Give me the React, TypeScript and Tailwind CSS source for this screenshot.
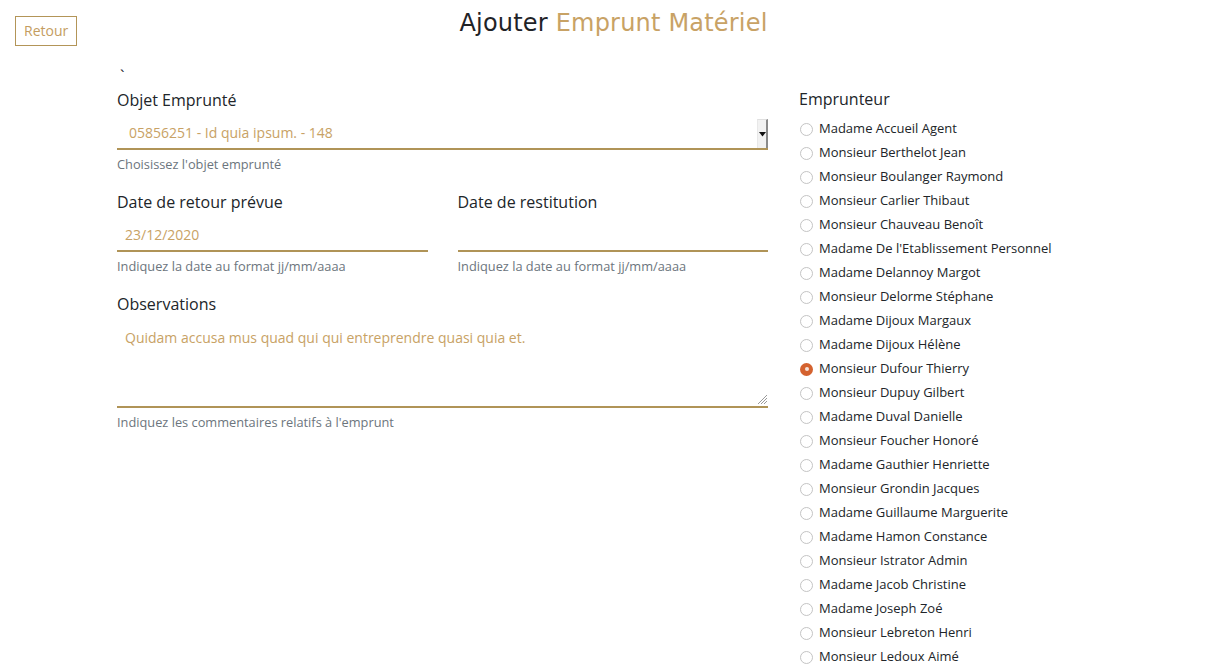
import React from "react";

const names: string[] = [
  "Madame Accueil Agent",
  "Monsieur Berthelot Jean",
  "Monsieur Boulanger Raymond",
  "Monsieur Carlier Thibaut",
  "Monsieur Chauveau Benoît",
  "Madame De l'Etablissement Personnel",
  "Madame Delannoy Margot",
  "Monsieur Delorme Stéphane",
  "Madame Dijoux Margaux",
  "Madame Dijoux Hélène",
  "Monsieur Dufour Thierry",
  "Monsieur Dupuy Gilbert",
  "Madame Duval Danielle",
  "Monsieur Foucher Honoré",
  "Madame Gauthier Henriette",
  "Monsieur Grondin Jacques",
  "Madame Guillaume Marguerite",
  "Madame Hamon Constance",
  "Monsieur Istrator Admin",
  "Madame Jacob Christine",
  "Madame Joseph Zoé",
  "Monsieur Lebreton Henri",
  "Monsieur Ledoux Aimé",
];

function Radio({ checked }: { checked: boolean }) {
  return checked ? (
    <span className="ml-px flex h-[13px] w-[13px] shrink-0 items-center justify-center rounded-full bg-[#d4622f]">
      <span className="h-[4px] w-[4px] rounded-full bg-[#f6e3da]" />
    </span>
  ) : (
    <span className="ml-px h-[13px] w-[13px] shrink-0 rounded-full border border-[#c4c4c4] bg-white" />
  );
}

export default function App() {
  return (
    <div
      className="min-h-[671px] w-full bg-white pt-[8px] text-[#212529]"
      style={{ fontFamily: '"Open Sans", "Liberation Sans", sans-serif' }}
    >
      <div className="grid grid-cols-[1fr_auto_1fr] items-start px-[15px]">
        <div>
          <button className="mt-[8px] h-[30px] border border-[#b39558] px-[8px] text-[14px] leading-[28px] text-[#c49d5f]">
            Retour
          </button>
        </div>
        <h1
          className="mt-[1px] text-[24px] leading-[28px] font-normal tracking-[0.2px]"
          style={{ fontFamily: '"DejaVu Sans", sans-serif' }}
        >
          <span className="text-[#1f2327]">Ajouter </span>
          <span className="text-[#c8a265]">Emprunt Matériel</span>
        </h1>
        <div />
      </div>

      <div className="mt-[18px] pl-[117px]">
        <div className="pl-[3px] text-[16px] leading-[24px]">`</div>
        <div className="flex gap-[31px]">
          <div className="w-[651px] shrink-0">
            <div className="text-[16px] leading-[24px]">Objet Emprunté</div>
            <div className="mt-[5px] flex h-[33px] items-stretch border-b-2 border-[#b09457]">
              <div className="flex flex-1 items-center pl-[12px] text-[14px] text-[#c8a265]">
                05856251 - Id quia ipsum. - 148
              </div>
              <div className="mt-[2px] mb-0 flex w-[11px] items-center justify-center border-t border-l border-r-2 border-t-[#e0e0e0] border-l-[#e8e8e8] border-r-[#8a8a8a] bg-[#f2f2f2]">
                <svg width="7" height="5" viewBox="0 0 7 5">
                  <path d="M0 0 H7 L3.5 4.5 Z" fill="#111" />
                </svg>
              </div>
            </div>
            <div className="mt-[5px] text-[12.8px] leading-[18px] text-[#6c757d]">
              Choisissez l'objet emprunté
            </div>

            <div className="mt-[17px] flex gap-[30px]">
              <div className="flex-1">
                <div className="text-[16px] leading-[24px]">Date de retour prévue</div>
                <div className="mt-[5px] flex h-[33px] items-center border-b-2 border-[#b09457] pl-[8px] text-[14px] text-[#c8a265]">
                  23/12/2020
                </div>
                <div className="mt-[5px] text-[12.8px] leading-[18px] text-[#6c757d]">
                  Indiquez la date au format jj/mm/aaaa
                </div>
              </div>
              <div className="flex-1">
                <div className="text-[16px] leading-[24px]">Date de restitution</div>
                <div className="mt-[5px] h-[33px] border-b-2 border-[#b09457]" />
                <div className="mt-[5px] text-[12.8px] leading-[18px] text-[#6c757d]">
                  Indiquez la date au format jj/mm/aaaa
                </div>
              </div>
            </div>

            <div className="mt-[17px] text-[16px] leading-[24px]">Observations</div>
            <div className="mt-[5px] flex h-[87px] border-b-2 border-[#b09457]">
              <div className="flex-1 pt-[6px] pl-[8px] text-[14px] leading-[21px] text-[#c8a265]">
                Quidam accusa mus quad qui qui entreprendre quasi quia et.
              </div>
              <div className="flex items-end pb-[1px]">
                <svg width="11" height="11" viewBox="0 0 11 11">
                  <path d="M10 1 L1 10 M10 4 L4 10 M10 7 L7 10" stroke="#9a9a9a" strokeWidth="1" />
                </svg>
              </div>
            </div>
            <div className="mt-[5px] text-[12.8px] leading-[18px] text-[#6c757d]">
              Indiquez les commentaires relatifs à l'emprunt
            </div>
          </div>

          <div className="flex-1">
            <div className="mt-[-1px] text-[16px] leading-[24px]">Emprunteur</div>
            <div className="mt-[6px] flex flex-col">
              {names.map((n) => (
                <div key={n} className="flex h-[24px] items-center gap-[6px] text-[13px] text-[#212529]">
                  <Radio checked={n === "Monsieur Dufour Thierry"} />
                  <span>{n}</span>
                </div>
              ))}
            </div>
          </div>
        </div>
      </div>
    </div>
  );
}
